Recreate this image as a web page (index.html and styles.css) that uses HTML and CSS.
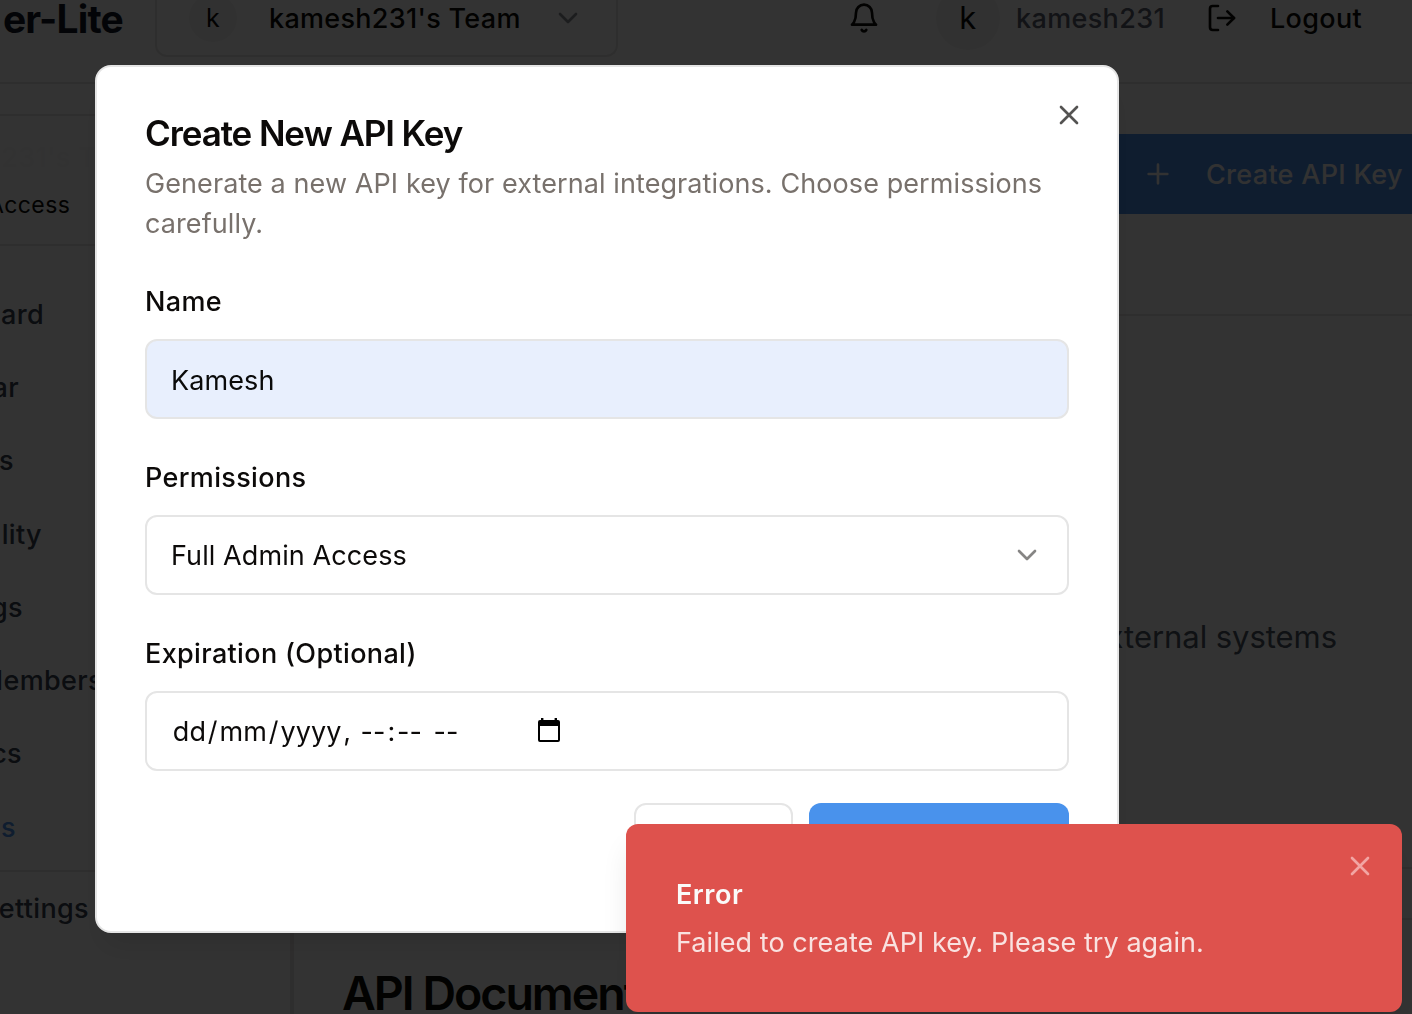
FILE: index.html
```html
<!DOCTYPE html>
<html lang="en">
<head>
<meta charset="utf-8">
<title>API Keys</title>
<link rel="stylesheet" href="styles.css">
</head>
<body>
<div class="app">
  <header class="topbar">
    <div class="brand">er-Lite</div>
    <div class="team-select">
      <span class="avatar avatar-sm">k</span>
      <span class="team-name">kamesh231's Team</span>
      <svg class="icon muted" viewBox="0 0 24 24"><path d="m6 9 6 6 6-6"/></svg>
    </div>
    <div class="account">
      <svg class="icon bell" viewBox="0 0 24 24"><path d="M6 8a6 6 0 0 1 12 0c0 7 3 9 3 9H3s3-2 3-9"/><path d="M10.3 21a1.94 1.94 0 0 0 3.4 0"/></svg>
      <span class="avatar">k</span>
      <span class="username">kamesh231</span>
      <svg class="icon logout-icon" viewBox="0 0 24 24"><path d="M9 21H5a2 2 0 0 1-2-2V5a2 2 0 0 1 2-2h4"/><path d="m16 17 5-5-5-5"/><path d="M21 12H9"/></svg>
      <span class="logout">Logout</span>
    </div>
  </header>
  <div class="body">
    <aside class="sidebar">
      <div class="team-info">
        <div class="team-label">kamesh231's Team</div>
        <div class="team-access">Access</div>
      </div>
      <nav class="nav">
        <a class="nav-item w-ard">ard</a>
        <a class="nav-item w-ar">ar</a>
        <a class="nav-item w-s">s</a>
        <a class="nav-item w-lity">lity</a>
        <a class="nav-item w-gs">gs</a>
        <a class="nav-item w-members">Members</a>
        <a class="nav-item w-cs">cs</a>
        <a class="nav-item w-active">s</a>
      </nav>
      <div class="nav-footer"><a class="nav-item w-settings">ettings</a></div>
    </aside>
    <main class="main">
      <div class="page-head">
        <button class="create"><svg class="icon" viewBox="0 0 24 24"><path d="M5 12h14M12 5v14"/></svg><span>Create API Key</span></button>
      </div>
      <section class="card keys"><p>external systems</p></section>
      <section class="card docs"><h2>API Documentation</h2></section>
    </main>
  </div>
</div>

<div class="overlay">
  <div class="dialog" role="dialog">
    <svg class="icon dialog-close" viewBox="0 0 24 24"><path d="M18 6 6 18M6 6l12 12"/></svg>
    <h1 class="title">Create New API Key</h1>
    <p class="desc">Generate a new API key for external integrations. Choose permissions carefully.</p>
    <div class="fields">
      <div class="field">
        <div class="label">Name</div>
        <div class="control filled">Kamesh</div>
      </div>
      <div class="field">
        <div class="label">Permissions</div>
        <div class="control select"><span>Full Admin Access</span><svg class="icon" viewBox="0 0 24 24"><path d="m6 9 6 6 6-6"/></svg></div>
      </div>
      <div class="field">
        <div class="label">Expiration (Optional)</div>
        <div class="control date">
          <div class="parts"><span>dd</span>/<span>mm</span>/<span>yyyy</span>, <span>--</span>:<span>--</span> <span>--</span></div>
          <svg class="calendar" viewBox="0 0 22 24"><path fill-rule="evenodd" d="M3 0h2.4v2h11.2V0H19v2h1a2 2 0 0 1 2 2v18a2 2 0 0 1-2 2H2a2 2 0 0 1-2-2V4a2 2 0 0 1 2-2h1ZM2 8v14h18V8Z"/></svg>
        </div>
      </div>
    </div>
    <div class="actions">
      <button class="btn-outline" aria-label="Cancel"></button>
      <button class="btn-primary" aria-label="Create"></button>
    </div>
  </div>
</div>

<div class="toast" role="alert">
  <svg class="icon toast-close" viewBox="0 0 24 24"><path d="M18 6 6 18M6 6l12 12"/></svg>
  <div class="toast-title">Error</div>
  <div class="toast-text">Failed to create API key. Please try again.</div>
</div>
</body>
</html>
```
FILE: styles.css
```css
* { box-sizing: border-box; }
html, body { margin: 0; height: 100%; overflow: hidden; }
body {
  font-family: Inter, "Liberation Sans", sans-serif;
  font-size: 27px;
  line-height: 40px;
  letter-spacing: 0.09px;
  color: #0c0a09;
  background: #fff;
}
h1, h2, p { margin: 0; }
button { font: inherit; letter-spacing: inherit; border: 0; padding: 0; }
.icon {
  width: 32px; height: 32px; flex: none;
  fill: none; stroke: currentColor; stroke-width: 2;
  stroke-linecap: round; stroke-linejoin: round;
}

/* Page behind the dialog */
.app { height: 1014px; display: flex; flex-direction: column; overflow: hidden; }
.topbar {
  height: 84px; flex: none; display: flex; align-items: flex-start;
  border-bottom: 2px solid #e7e5e4; font-weight: 500; letter-spacing: 0.35px;
}
.brand {
  width: 155px; padding-right: 32px; display: flex; justify-content: flex-end;
  line-height: 38px; font-size: 39px; font-weight: 700; letter-spacing: -0.8px; color: #111827;
}
.team-select {
  width: 463px; height: 57px; padding: 0 32px 20px 32px;
  display: flex; align-items: center;
  border: 2px solid #e7e5e4; border-top: 0; border-radius: 0 0 12px 12px;
}
.team-name { margin: 0 auto 0 32px; padding-top: 2px; letter-spacing: 0.3px; }
.muted { color: #8a8f98; }
.avatar {
  width: 64px; height: 64px; flex: none; border-radius: 50%; background: #f5f5f4;
  display: flex; align-items: center; justify-content: center; font-weight: 400; font-size: 31px;
}
.avatar-sm { width: 48px; height: 48px; font-size: 25px; }
.account { margin-left: 230px; height: 36px; display: flex; align-items: center; }
.account .avatar { margin-left: 56px; }
.username { margin-left: 16px; width: 151px; padding-top: 2px; color: #5b6070; }
.logout-icon { margin-left: 39px; }
.logout { margin-left: 32px; padding-top: 2px; }

.body { flex: 1; display: flex; min-height: 0; }
.sidebar { width: 292px; flex: none; border-right: 2px solid #e7e5e4; padding-top: 30px; }
.team-info {
  height: 132px; padding-top: 22px;
  border-top: 2px solid #e7e5e4; border-bottom: 2px solid #e7e5e4;
}
.team-label { margin-left: -102px; font-weight: 500; letter-spacing: 0.35px; color: #f8f8f7; white-space: nowrap; }
.team-access { margin: 7px 0 0 -12px; font-size: 23px; letter-spacing: 0.4px; }
.nav { padding-top: 32px; height: 624px; }
.nav-item {
  display: flex; justify-content: flex-end; align-items: center; height: 73.3px;
  font-weight: 500; letter-spacing: 0.35px; color: #374151;
}
.w-ard { width: 44px; }
.w-ar { width: 19px; }
.w-s { width: 14px; }
.w-lity { width: 42px; }
.w-gs { width: 23px; }
.w-members { width: 103px; }
.w-cs { width: 22px; }
.w-active { width: 16px; color: #4a90ea; }
.w-settings { width: 89px; }
.nav-footer { border-top: 2px solid #e7e5e4; }

.main { flex: 1; min-width: 0; }
.page-head { height: 230px; padding-top: 50px; display: flex; justify-content: flex-end; }
.create {
  width: 330px; height: 80px; padding-left: 60px; display: flex; align-items: center; gap: 32px;
  background: #4a90ea; color: #fafaf9; font-weight: 500; letter-spacing: 0.3px; white-space: nowrap;
}
.create span { padding-top: 2px; }
.card { border: 2px solid #e7e5e4; border-right: 0; }
.keys {
  height: 555px; padding: 90px 75px 0 0; display: flex; align-items: center; justify-content: flex-end;
  font-size: 31px; letter-spacing: -0.05px; color: #4b5563;
}
.docs { margin-top: 49px; height: 200px; padding: 49px 48px; }
.docs h2 { font-size: 46.5px; font-weight: 600; line-height: 48px; letter-spacing: -2px; white-space: nowrap; }

/* Dialog */
.overlay {
  position: fixed; inset: 0; background: rgba(0, 0, 0, .8);
  padding: 65px 0 0 95px;
}
.dialog {
  position: relative; width: 1024px; height: 868px; padding: 48px;
  background: #fff; border: 2px solid #e5e5e5; border-radius: 16px;
  box-shadow: 0 20px 30px -6px rgba(0, 0, 0, .1);
}
.dialog-close { position: absolute; top: 32px; right: 32px; color: #545352; }
.title { height: 37px; font-size: 35px; line-height: 36px; font-weight: 600; letter-spacing: -1.1px; }
.desc { margin-top: 12px; color: #78716c; }
.fields { margin-top: 43px; display: flex; flex-direction: column; gap: 44px; }
.label { height: 28px; line-height: 30px; margin-bottom: 24px; font-weight: 500; letter-spacing: 0.35px; }
.control {
  height: 80px; padding: 2px 24px 0; display: flex; align-items: center;
  border: 2px solid #e5e5e5; border-radius: 12px;
}
.filled { background: #e8effd; color: #0a0a0a; padding-top: 4px; }
.select { justify-content: space-between; }
.select .icon { margin-top: -2px; color: #868584; }
.parts { width: 367px; white-space: nowrap; }
.parts span { padding: 0 1.8px; }
.calendar { width: 22px; height: 24px; margin-top: -4px; fill: #000; }
.actions { margin-top: 32px; display: flex; justify-content: flex-end; gap: 16px; }
.actions button { height: 80px; border-radius: 12px; }
.btn-outline { width: 159px; background: #fff; border: 2px solid #e5e5e5; }
.btn-primary { width: 260px; background: #4992ec; }

/* Toast */
.toast {
  position: fixed; left: 626px; top: 824px; width: 776px; height: 188px;
  padding: 51px 50px; border-radius: 12px; background: #de524d; color: #fafaf9;
  box-shadow: 0 20px 30px -6px rgba(0, 0, 0, .12);
}
.toast-close { position: absolute; top: 26px; right: 26px; color: #f2a5a3; }
.toast-title { font-weight: 600; letter-spacing: 0.5px; }
.toast-text { margin-top: 8px; letter-spacing: 0.06px; color: #f9e2e0; }
```
